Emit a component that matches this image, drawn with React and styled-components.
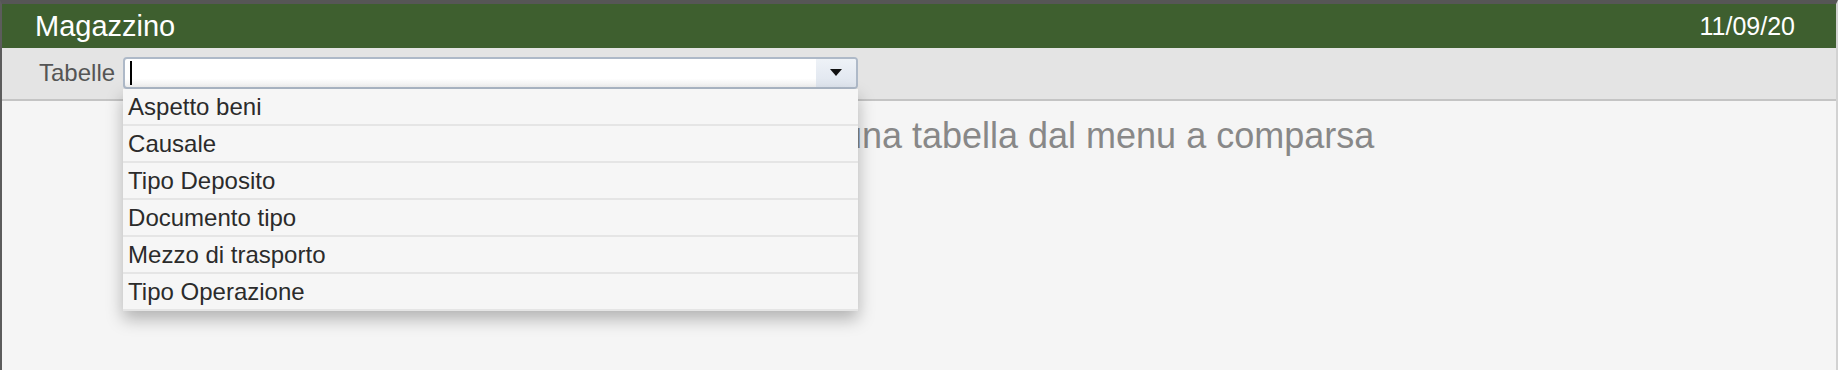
import React from 'react';
import styled, { createGlobalStyle } from 'styled-components';

const GlobalStyle = createGlobalStyle`
  body {
    margin: 0;
    background: #f5f5f5;
    font-family: "Liberation Sans", Arial, sans-serif;
  }
`;

const Page = styled.div`
  min-height: 370px;
  box-sizing: border-box;
  border-top: 4px solid #565656;
  border-left: 2px solid #5c5c5c;
  border-right: 2px solid #d2d2d2;
  background: #f5f5f5;
  display: flex;
  flex-direction: column;
`;

const Header = styled.div`
  height: 44px;
  background: #3e5f2f;
  color: #fff;
  display: flex;
  align-items: center;
  justify-content: space-between;
  padding: 0 41px 0 33px;
  .title {
    font-size: 29px;
  }
  .date {
    font-size: 25px;
  }
`;

const Toolbar = styled.div`
  height: 53px;
  box-sizing: border-box;
  padding: 0 0 2px 37px;
  background: #e4e4e4;
  border-bottom: 2px solid #c4c4c4;
  display: flex;
  align-items: center;
  gap: 8px;
`;

const Label = styled.span`
  font-size: 24px;
  color: #555;
`;

const Combo = styled.div`
  position: relative;
  width: 735px;
  height: 32px;
  box-sizing: border-box;
  border: 2px solid #aeb9c8;
  border-radius: 4px;
  background: linear-gradient(#fff 70%, #f1f1f1);
  display: flex;
`;

const Field = styled.div`
  flex: 1;
  display: flex;
  align-items: center;
  padding-left: 5px;
`;

const Caret = styled.span`
  width: 2px;
  height: 24px;
  background: #000;
`;

const ArrowButton = styled.div`
  width: 40px;
  display: flex;
  align-items: center;
  justify-content: center;
  background: linear-gradient(#eef2f7, #dfe5ee);
  border-radius: 0 2px 2px 0;
  &::after {
    content: '';
    border-left: 6px solid transparent;
    border-right: 6px solid transparent;
    border-top: 7px solid #111;
  }
`;

const Menu = styled.ul`
  position: absolute;
  top: calc(100% + 2px);
  left: -2px;
  right: -2px;
  margin: 0;
  padding: 0;
  list-style: none;
  background: #f6f6f6;
  box-shadow: 0 8px 16px rgba(0, 0, 0, 0.28);
  z-index: 2;
`;

const Item = styled.li`
  height: 35px;
  line-height: 35px;
  padding-left: 5px;
  font-size: 24px;
  color: #2b2b2b;
  border-bottom: 2px solid #e5e5e5;
`;

const Content = styled.div`
  flex: 1;
  padding: 14px 0 0 178px;
  text-align: center;
  font-size: 36px;
  color: #888;
`;

const items = [
  'Aspetto beni',
  'Causale',
  'Tipo Deposito',
  'Documento tipo',
  'Mezzo di trasporto',
  'Tipo Operazione',
];

export default function App() {
  return (
    <>
      <GlobalStyle />
      <Page>
        <Header>
          <span className="title">Magazzino</span>
          <span className="date">11/09/20</span>
        </Header>
        <Toolbar>
          <Label>Tabelle</Label>
          <Combo>
            <Field>
              <Caret />
            </Field>
            <ArrowButton />
            <Menu>
              {items.map((it) => (
                <Item key={it}>{it}</Item>
              ))}
            </Menu>
          </Combo>
        </Toolbar>
        <Content>Selezionare una tabella dal menu a comparsa</Content>
      </Page>
    </>
  );
}
